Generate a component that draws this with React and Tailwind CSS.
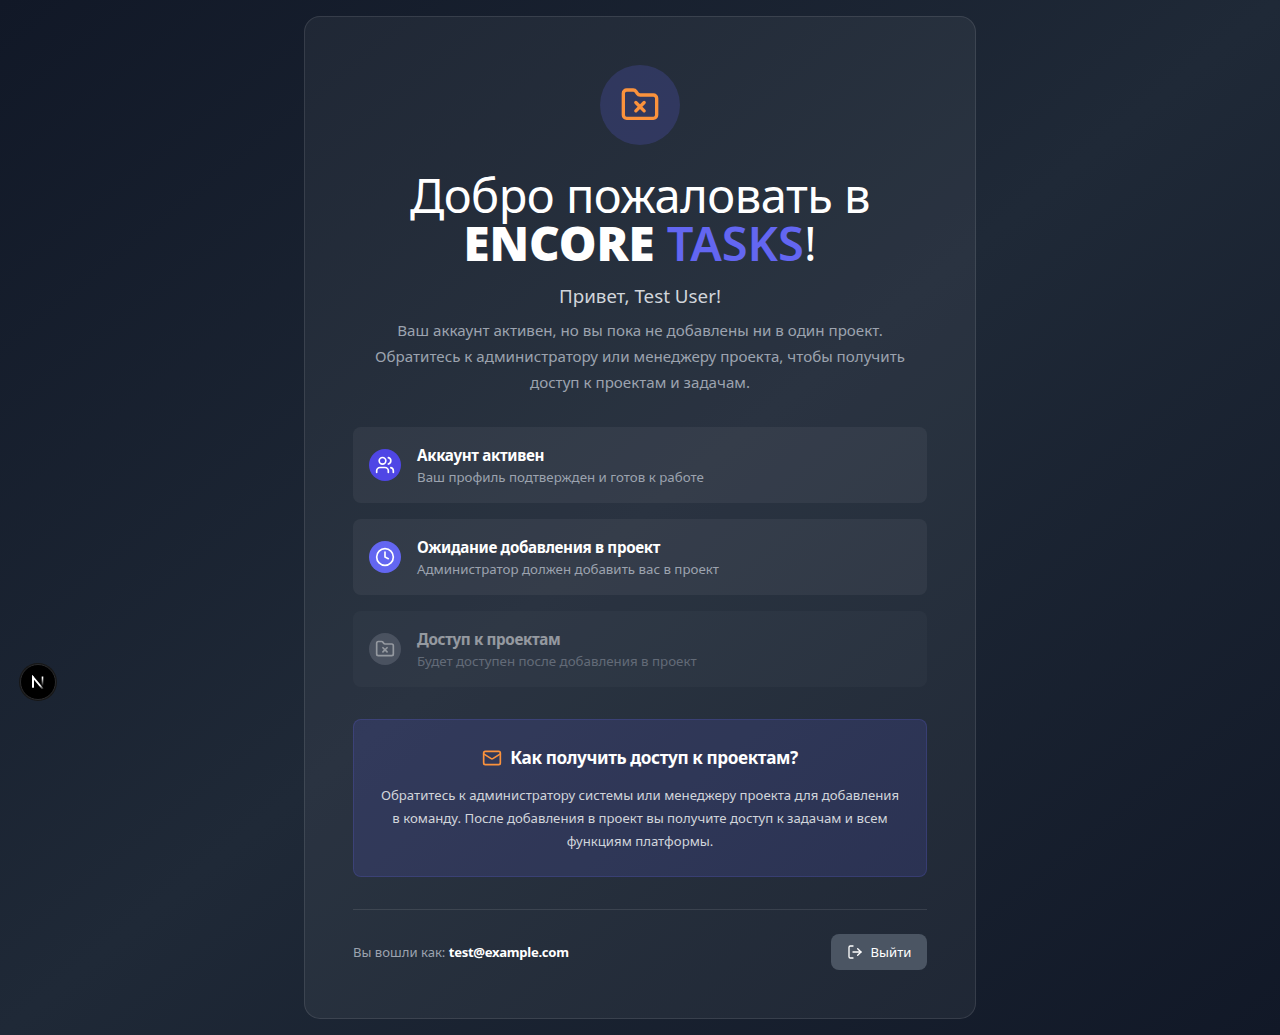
import { FolderX, Users, Clock, Mail, LogOut } from "lucide-react";

function Step({ icon: Icon, tone, title, text, muted }) {
  return (
    <div className={`flex h-[76px] items-center rounded-lg bg-white/5 px-4 ${muted ? "opacity-50" : ""}`}>
      <div className={`mr-4 flex h-8 w-8 shrink-0 items-center justify-center rounded-full ${tone}`}>
        <Icon size={20} />
      </div>
      <div>
        <h3 className="text-[15.2px] leading-6 font-bold tracking-[-0.35px] whitespace-nowrap text-white">{title}</h3>
        <p className="text-[13.3px] leading-5 whitespace-nowrap text-[#9ca3af]">{text}</p>
      </div>
    </div>
  );
}

function DevBadge() {
  return (
    <div className="absolute top-[664px] left-5 flex h-9 w-9 items-center justify-center rounded-full border border-[#2a2b2e] bg-black shadow-[0_0_0_1px_#171717]">
      <svg width="14" height="14" viewBox="0 0 14 14" fill="none">
        <defs>
          <linearGradient id="diag" x1="7" y1="7" x2="13" y2="14" gradientUnits="userSpaceOnUse">
            <stop offset="0.4" stopColor="#fff" />
            <stop offset="1" stopColor="#fff" stopOpacity="0" />
          </linearGradient>
          <linearGradient id="stem" x1="0" y1="1" x2="0" y2="11" gradientUnits="userSpaceOnUse">
            <stop offset="0.2" stopColor="#fff" />
            <stop offset="1" stopColor="#fff" stopOpacity="0" />
          </linearGradient>
        </defs>
        <path d="M2 12.5V2.2L12 14" stroke="url(#diag)" strokeWidth="1.9" />
        <path d="M2 12.5V1.6" stroke="#fff" strokeWidth="1.9" />
        <path d="M11.5 1.5V11" stroke="url(#stem)" strokeWidth="1.6" />
      </svg>
    </div>
  );
}

export default function App() {
  return (
    <div className="relative flex h-[1035px] items-start justify-center bg-[linear-gradient(to_bottom_right,#111827,#1f2937,#111827)] pt-4 font-['Noto_Sans','Open_Sans',sans-serif] text-white">
      <main className="h-[1003px] w-[672px] rounded-2xl border border-white/10 bg-white/5 p-12 text-center">
        <div className="mx-auto flex h-20 w-20 items-center justify-center rounded-full bg-[#6366f1]/20">
          <FolderX size={40} className="text-[#fb923c]" />
        </div>
        <h1 className="mt-[26px] text-[47px] leading-[48px] whitespace-nowrap">
          <span className="tracking-[-0.5px]">Добро пожаловать в</span><br />
          <span className="text-[47.5px] font-black tracking-[-0.1px]">ENCORE</span> <span className="font-semibold text-[#6366f1]">TASKS</span>!
        </h1>
        <p className="mt-[15px] text-[18.8px] leading-7 text-[#d1d5db]">Привет, Test User!</p>
        <p className="mt-[7px] text-[15.15px] leading-[26px] whitespace-nowrap text-[#9ca3af]">
          Ваш аккаунт активен, но вы пока не добавлены ни в один проект.<br />
          Обратитесь к администратору или менеджеру проекта, чтобы получить<br />
          доступ к проектам и задачам.
        </p>
        <div className="mt-8 flex flex-col gap-4 text-left">
          <Step icon={Users} tone="bg-[#4f46e5]" title="Аккаунт активен" text="Ваш профиль подтвержден и готов к работе" />
          <Step icon={Clock} tone="bg-[#6366f1]" title="Ожидание добавления в проект" text="Администратор должен добавить вас в проект" />
          <Step muted icon={FolderX} tone="bg-[#6b7280]" title="Доступ к проектам" text="Будет доступен после добавления в проект" />
        </div>
        <section className="mt-8 h-[158px] rounded-lg border border-[#6366f1]/20 bg-[#6366f1]/15 pt-6">
          <h2 className="flex h-7 items-center justify-center gap-2 text-[17.2px] font-bold tracking-[-0.4px]"><Mail size={20} className="text-[#fb923c]" /><span>Как получить доступ к проектам?</span></h2>
          <p className="mt-3 text-[13.2px] leading-[23px] whitespace-nowrap text-[#d1d5db]">
            Обратитесь к администратору системы или менеджеру проекта для добавления<br />
            в команду. После добавления в проект вы получите доступ к задачам и всем<br />
            функциям платформы.
          </p>
        </section>
        <footer className="mt-8 flex items-center justify-between border-t border-white/10 pt-6 text-[13.1px]">
          <p className="pt-0.5 text-[#9ca3af]">Вы вошли как: <span className="font-bold tracking-[-0.3px] text-white">test@example.com</span></p>
          <button className="flex h-9 w-24 items-center justify-center gap-2 rounded-lg bg-[#4b5563]"><LogOut size={16} /><span className="pt-px">Выйти</span></button>
        </footer>
      </main>
      <DevBadge />
    </div>
  );
}
